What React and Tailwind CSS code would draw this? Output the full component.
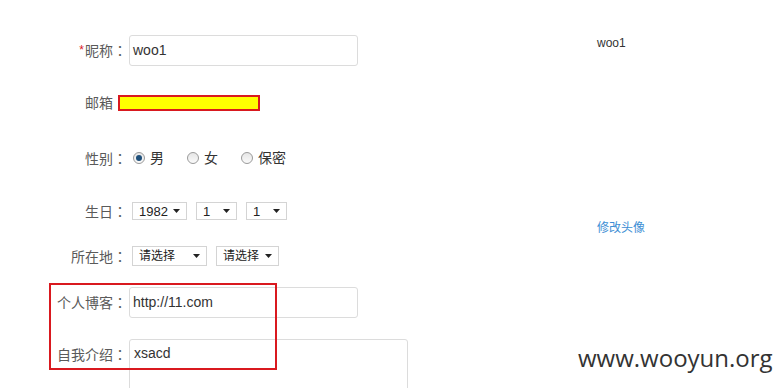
// App.jsx
const cjk = { fontFamily: '"Liberation Sans", "Noto Sans CJK SC", sans-serif' };

export default function App() {
  return (
    <div
      className="relative w-[784px] h-[388px] overflow-hidden bg-white text-[#5a5a5a]"
      style={cjk}
    >
      <div className="flex">
        {/* Form column */}
        <div className="w-[560px] pt-[35px] flex flex-col">
          {/* Nickname */}
          <div className="flex items-center h-[31px]">
            <Label>
              <span className="text-[#d9191f] text-[12px] mr-[1px] relative -top-[2px]">*</span>昵称<Colon />
            </Label>
            <TextBox className="ml-[2px]" value="woo1" />
          </div>

          {/* Email (redacted) */}
          <div className="flex items-center h-[16px] mt-[29px]">
            <div className="w-[113px] text-right text-[14px] leading-none">邮箱</div>
            <div className="ml-[5px] w-[142px] h-[16px] bg-[#ffff00] border-2 border-[#d9191f]" />
          </div>

          {/* Gender */}
          <div className="flex items-center h-[20px] mt-[37px]">
            <Label>性别<Colon /></Label>
            <div className="ml-[6px] flex items-center text-[14px] text-[#333]">
              <Radio checked />
              <span className="ml-[5px]">男</span>
              <span className="ml-[23px]"><Radio /></span>
              <span className="ml-[5px]">女</span>
              <span className="ml-[23px]"><Radio /></span>
              <span className="ml-[5px]">保密</span>
            </div>
          </div>

          {/* Birthday */}
          <div className="flex items-center h-[18px] mt-[34px]">
            <Label>生日<Colon /></Label>
            <div className="ml-[5px] flex items-center gap-[9px]">
              <Select w="w-[55px]">1982</Select>
              <Select w="w-[41px]">1</Select>
              <Select w="w-[41px]">1</Select>
            </div>
          </div>

          {/* Location */}
          <div className="flex items-center h-[20px] mt-[26px]">
            <Label>所在地<Colon /></Label>
            <div className="ml-[5px] flex items-center gap-[9px]">
              <Select w="w-[75px]" h="h-[20px]" text="text-[12px]">请选择</Select>
              <Select w="w-[63px]" h="h-[20px]" text="text-[12px]">请选择</Select>
            </div>
          </div>

          {/* Blog */}
          <div className="flex items-center h-[31px] mt-[21px]">
            <Label>个人博客<Colon /></Label>
            <TextBox className="ml-[2px]" value="http://11.com" />
          </div>

          {/* Intro */}
          <div className="flex items-start mt-[21px]">
            <div className="w-[127px] text-right text-[14px] pt-[7px] leading-[16px]">自我介绍<Colon /></div>
            <div className="ml-[2px] w-[279px] h-[70px] border border-[#dcdcdc] rounded-[3px] px-[4px] pt-[5px] text-[14px] leading-[16px] text-[#333]">
              xsacd
            </div>
          </div>
        </div>

        {/* Right column */}
        <div className="pl-[37px] pt-[36px] flex flex-col text-[12px]">
          <div className="text-[#333] leading-[14px]">woo1</div>
          <a className="mt-[171px] text-[#3d8ed4] leading-[14px]">修改头像</a>
        </div>
      </div>

      {/* Red annotation box */}
      <div className="absolute left-[49px] top-[283px] w-[228px] h-[87px] border-2 border-[#d9191f]" />

      {/* Watermark */}
      <div
        className="absolute left-[578px] top-[342px] text-[24px] leading-[32px] text-[#333]"
        style={{ fontFamily: '"Open Sans", sans-serif' }}
      >
        www.wooyun.org
      </div>
    </div>
  );
}

function Colon() {
  return <span style={{ fontFamily: '"Noto Sans CJK JP", sans-serif' }}>：</span>;
}

function Label({ children }) {
  return <div className="w-[127px] text-right text-[14px] leading-[16px]">{children}</div>;
}

function TextBox({ value, className = "" }) {
  return (
    <div
      className={`w-[229px] h-[31px] border border-[#dcdcdc] rounded-[3px] flex items-center px-[3px] text-[14px] text-[#333] ${className}`}
    >
      {value}
    </div>
  );
}

function Radio({ checked }) {
  return (
    <span className="w-[12px] h-[12px] rounded-full border border-[#9a9a9a] bg-gradient-to-b from-[#e6e6e6] to-[#fafafa] flex items-center justify-center">
      {checked && <span className="w-[6px] h-[6px] rounded-full bg-[#1e4f7a]" />}
    </span>
  );
}

function Select({ children, w, h = "h-[18px]", text = "text-[13px]" }) {
  return (
    <div
      className={`${w} ${h} border border-[#d4d4d4] flex items-center justify-between pl-[6px] pr-[6px] ${text} text-[#222] leading-none`}
    >
      <span>{children}</span>
      <svg width="7" height="4" viewBox="0 0 7 4">
        <path d="M0 0h7L3.5 4z" fill="#222" />
      </svg>
    </div>
  );
}
